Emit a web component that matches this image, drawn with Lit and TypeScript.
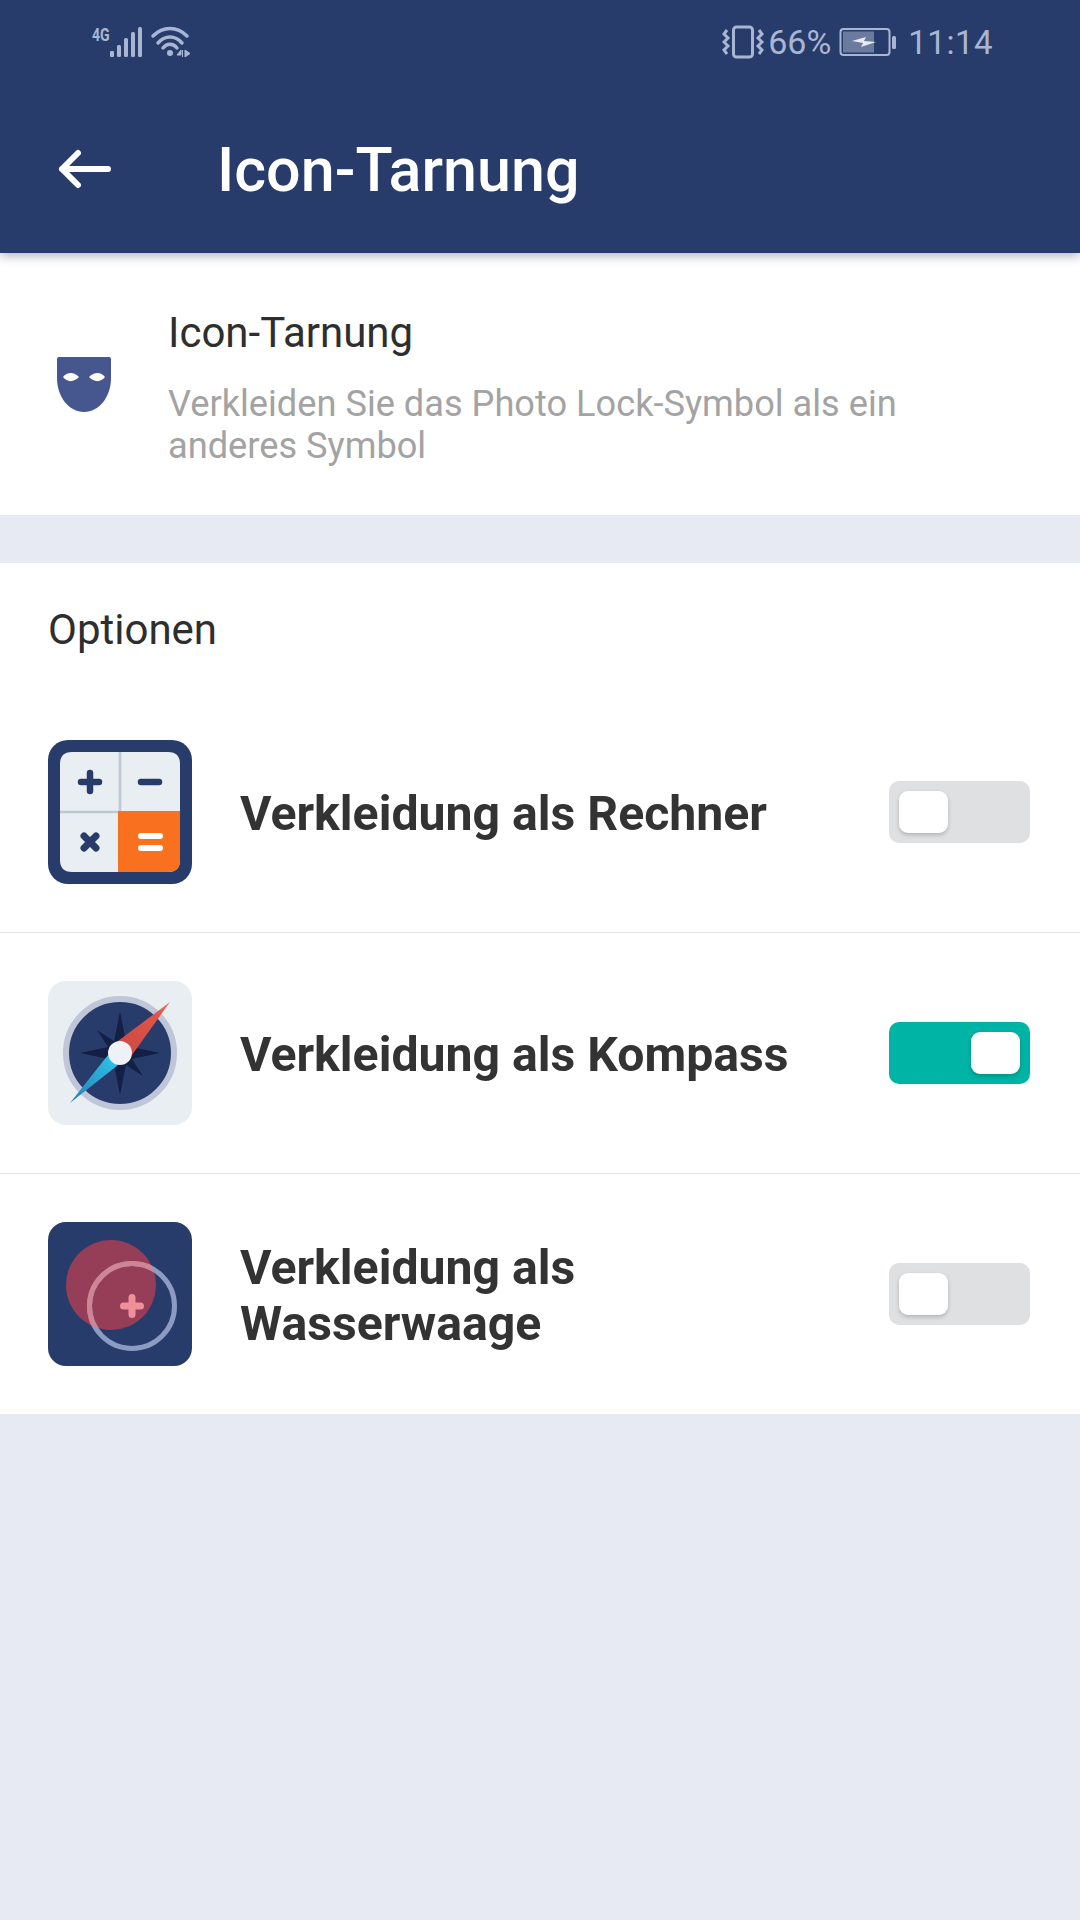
import { LitElement, html, css, svg } from "lit";
import { customElement } from "lit/decorators.js";

const mask = svg`<svg width="56" height="56" viewBox="0 0 56 56"><path d="M3 1 H53 Q55 1 55 3 V22 C55 41 43 56 28 56 C13 56 1 41 1 22 V3 Q1 1 3 1Z" fill="#46568f"/><path d="M7 21 C11 15.500 18 15.500 23 21 C18 26.500 11 26.500 7 21Z M33 21 C38 15.500 45 15.500 49 21 C45 26.500 38 26.500 33 21Z" fill="#fff"/></svg>`;

const calc = svg`<svg width="144" height="144" viewBox="0 0 144 144">
<rect width="144" height="144" rx="20" fill="#283c6b"/>
<path d="M24 12 H120 Q132 12 132 24 V120 Q132 132 120 132 H24 Q12 132 12 120 V24 Q12 12 24 12Z" fill="#e9eef2"/>
<path d="M72 12 V71 M12 72 H71" stroke="#bfc6d6" stroke-width="2.500" fill="none"/>
<path d="M70 71 H132 V120 Q132 132 120 132 H70Z" fill="#f9701f"/>
<path d="M42 33 V51 M33 42 H51 M93 42 H111" stroke="#283c6b" stroke-width="6.500" stroke-linecap="round" fill="none"/>
<path d="M36 96 L48 108 M48 96 L36 108" stroke="#283c6b" stroke-width="7" stroke-linecap="round" fill="none"/>
<path d="M93 96 H112 M93 108 H112" stroke="#fff" stroke-width="6" stroke-linecap="round" fill="none"/>
</svg>`;

const compass = svg`<svg width="144" height="144" viewBox="0 0 144 144">
<defs>
<linearGradient id="needleRed" x1="122" y1="21" x2="75" y2="68" gradientUnits="userSpaceOnUse"><stop offset="0" stop-color="#e0796a"/><stop offset="0.300" stop-color="#dc5547"/><stop offset="1" stop-color="#cf4a44"/></linearGradient>
<linearGradient id="needleBlue" x1="22" y1="122" x2="66" y2="78" gradientUnits="userSpaceOnUse"><stop offset="0" stop-color="#2a7cb0"/><stop offset="1" stop-color="#2cc1e8"/></linearGradient>
</defs>
<rect width="144" height="144" rx="18" fill="#e9eef2"/>
<circle cx="72" cy="72" r="54" fill="#283c6b" stroke="#bfc6d8" stroke-width="6"/>
<path d="M72 31 L79 65 L112 72 L79 79 L72 114 L65 79 L32 72 L65 65Z" fill="#141f45"/>
<path d="M49 49 L72 64 L95 49 L80 72 L95 95 L72 80 L49 95 L64 72Z" fill="#141f45"/>
<path d="M70 60 L122 21 L84 74Z" fill="url(#needleRed)"/>
<path d="M60 74 L22 122 L70 84Z" fill="url(#needleBlue)"/>
<circle cx="72" cy="72" r="12" fill="#eef1f5"/>
</svg>`;

const level = svg`<svg width="144" height="144" viewBox="0 0 144 144">
<defs><clipPath id="redDisc"><circle cx="63" cy="63" r="45"/></clipPath></defs>
<rect width="144" height="144" rx="18" fill="#283c6b"/>
<circle cx="63" cy="63" r="45" fill="#963e58"/>
<circle cx="84" cy="84" r="42.500" fill="none" stroke="#8c9bc2" stroke-width="5"/>
<circle cx="84" cy="84" r="42.500" fill="none" stroke="#d08594" stroke-width="5" clip-path="url(#redDisc)"/>
<path d="M84 75.500 V92.500 M75.500 84 H92.500" stroke="#ef8f9a" stroke-width="7" stroke-linecap="round"/>
</svg>`;

const statusLeft = svg`<svg width="100" height="40" viewBox="0 0 100 40">
<rect x="18" y="29" width="4" height="6" rx="1" fill="#a9b6d3"/>
<rect x="25" y="23" width="4" height="12" rx="1.500" fill="#a9b6d3"/>
<rect x="32" y="16" width="4" height="19" rx="1.500" fill="#a9b6d3"/>
<rect x="39" y="10" width="4" height="25" rx="1.500" fill="#a9b6d3"/>
<rect x="46" y="5" width="4" height="30" rx="1.500" fill="#a9b6d3"/>
<path d="M61 14 C71 4 85 4 95 14 M66 21 C73 13 83 13 90 21 M71 26 C75 21 81 21 85 26" stroke="#a9b6d3" stroke-width="3.500" stroke-linecap="round" fill="none"/>
<circle cx="78" cy="31" r="3" fill="#a9b6d3"/>
<path d="M89 28 L85 33 H89Z M90.500 28 V35 M93 28 L98 31.500 L93 35Z" fill="#a9b6d3" stroke="#a9b6d3" stroke-width="1"/>
</svg>`;

const vibrate = svg`<svg width="44" height="34" viewBox="0 0 44 34">
<rect x="11.500" y="2" width="19" height="30" rx="3" fill="none" stroke="#a9b6d3" stroke-width="3"/>
<path d="M5 5 L2 9 L6 13 L2 17 L6 21 L2 25 L5 29 M37 5 L40 9 L36 13 L40 17 L36 21 L40 25 L37 29" stroke="#a9b6d3" stroke-width="3" fill="none"/>
</svg>`;

const battery = svg`<svg width="58" height="30" viewBox="0 0 58 30">
<rect x="1.500" y="2" width="49" height="26" rx="3" fill="none" stroke="#a9b6d3" stroke-width="2"/>
<rect x="4" y="4.500" width="31" height="21" fill="#6d7aa0"/>
<rect x="53" y="9" width="4" height="13" rx="1.500" fill="#a9b6d3"/>
<path d="M13 14 L27 10 L25 14 L37 15 L22 20 L24 16Z" fill="#e8ebf2"/>
</svg>`;

const back = svg`<svg width="56" height="44" viewBox="0 0 56 44"><path d="M6 22 H52 M22 6 L6 22 L22 38" stroke="#fff" stroke-width="6" stroke-linecap="round" stroke-linejoin="round" fill="none"/></svg>`;

@customElement("app-root")
export class AppRoot extends LitElement {
  static styles = css`
    :host {
      display: block;
      width: 1080px;
      height: 1920px;
      background: #e7eaf3;
      font-family: Roboto, "Noto Sans", sans-serif;
      color: #2e2e2e;
    }
    .appbar {
      height: 253px;
      background: #283c6b;
      box-shadow: 0 3px 10px rgba(40, 50, 80, 0.35);
      position: relative;
      display: flex;
      flex-direction: column;
    }
    .status {
      height: 84px;
      display: flex;
      align-items: center;
      justify-content: space-between;
      padding: 0 87px 0 92px;
      color: #a9b6d3;
    }
    .group { display: flex; align-items: center; }
    .net {
      font-size: 18px;
      font-weight: 700;
      width: 0;
      position: relative;
      top: -8px;
      white-space: nowrap;
      transform: scaleX(0.78);
      transform-origin: left center;
    }
    .pct { font-size: 34px; margin: 0 8px 0 2px; }
    .time { font-size: 33px; margin-left: 11px; letter-spacing: 0.5px; }
    .bar {
      flex: 1;
      display: flex;
      align-items: center;
      padding-left: 56px;
    }
    .bar h1 {
      margin: 2px 0 0 105px;
      font-size: 61px;
      font-weight: 500;
      color: #fff;
    }
    .intro {
      height: 262px;
      background: #fff;
      display: flex;
      align-items: center;
      padding-left: 56px;
      gap: 56px;
      box-sizing: border-box;
    }
    .intro-text { padding-top: 8px; }
    .intro-title { font-size: 42px; line-height: 46px; color: #2e2e2e; margin-bottom: 27px; }
    .intro-sub { font-size: 36.2px; line-height: 42px; color: #a3a3a3; width: 800px; }
    .options { margin-top: 48px; background: #fff; }
    .options-head {
      height: 129px;
      padding: 44px 0 0 48px;
      box-sizing: border-box;
      font-size: 42px;
      line-height: 46px;
      color: #2e2e2e;
    }
    .row {
      display: flex;
      align-items: center;
      height: 240px;
      padding: 0 50px 0 48px;
      border-bottom: 1px solid #e4e4e6;
    }
    .row:last-child { border-bottom: none; }
    .icon { width: 144px; height: 144px; flex: none; }
    .label {
      flex: 1;
      margin-left: 48px;
      font-size: 48.2px;
      line-height: 56px;
      font-weight: 700;
      color: #333;
      max-width: 600px;
      padding-top: 4px;
    }
    .toggle {
      margin-left: auto;
      width: 141px;
      height: 62px;
      border-radius: 10px;
      background: #dfe0e2;
      flex: none;
      display: flex;
      align-items: center;
      padding: 0 10px;
      box-sizing: border-box;
    }
    .toggle.on { background: #00b4a5; justify-content: flex-end; }
    .knob {
      width: 49px;
      height: 42px;
      border-radius: 9px;
      background: #fff;
      box-shadow: 0 2px 4px rgba(0, 0, 0, 0.2);
    }
  `;

  private row(icon: unknown, label: string, on: boolean) {
    return html`<div class="row">
      <div class="icon">${icon}</div>
      <div class="label">${label}</div>
      <div class="toggle ${on ? "on" : ""}"><div class="knob"></div></div>
    </div>`;
  }

  render() {
    return html`
      <div class="appbar">
        <div class="status">
          <div class="group">
            <span class="net">4G</span>
            ${statusLeft}
          </div>
          <div class="group">
            ${vibrate}
            <span class="pct">66%</span>
            ${battery}
            <span class="time">11:14</span>
          </div>
        </div>
        <div class="bar">
          ${back}
          <h1>Icon-Tarnung</h1>
        </div>
      </div>
      <div class="intro">
        ${mask}
        <div class="intro-text">
          <div class="intro-title">Icon-Tarnung</div>
          <div class="intro-sub">Verkleiden Sie das Photo Lock-Symbol als ein anderes Symbol</div>
        </div>
      </div>
      <div class="options">
        <div class="options-head">Optionen</div>
        ${this.row(calc, "Verkleidung als Rechner", false)}
        ${this.row(compass, "Verkleidung als Kompass", true)}
        ${this.row(level, "Verkleidung als Wasserwaage", false)}
      </div>
    `;
  }
}
